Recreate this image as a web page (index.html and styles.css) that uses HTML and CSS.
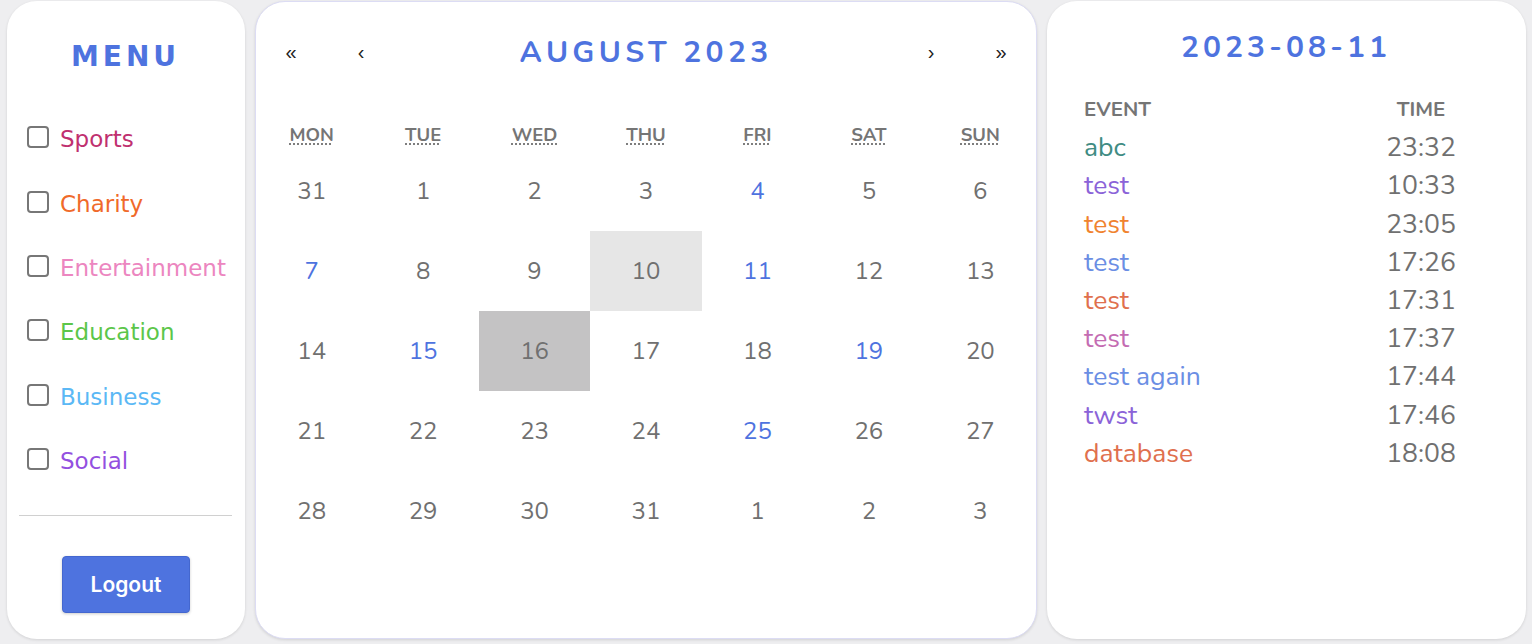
FILE: index.html
```html
<!DOCTYPE html>
<html lang="en">
<head>
    <meta charset="UTF-8">
    <meta name="viewport" content="width=device-width, initial-scale=1.0">
    <title>Event Calendar</title>
    <link rel="stylesheet" href="styles.css">
</head>
<body>
    <div class="layout">
        <aside class="menu">
            <h2 class="menu-title">MENU</h2>
            <ul class="categories">
                <li><label><input type="checkbox"><span class="cat-sports">Sports</span></label></li>
                <li><label><input type="checkbox"><span class="cat-charity">Charity</span></label></li>
                <li><label><input type="checkbox"><span class="cat-entertainment">Entertainment</span></label></li>
                <li><label><input type="checkbox"><span class="cat-education">Education</span></label></li>
                <li><label><input type="checkbox"><span class="cat-business">Business</span></label></li>
                <li><label><input type="checkbox"><span class="cat-social">Social</span></label></li>
            </ul>
            <hr class="divider">
            <div class="logout-wrap">
                <button class="logout" type="button">Logout</button>
            </div>
        </aside>

        <main class="calendar">
            <div class="calendar-nav">
                <button type="button" class="nav-btn">«</button>
                <button type="button" class="nav-btn">‹</button>
                <span class="nav-label">AUGUST 2023</span>
                <button type="button" class="nav-btn">›</button>
                <button type="button" class="nav-btn">»</button>
            </div>
            <div class="weekdays">
                <div><abbr title="Monday">MON</abbr></div>
                <div><abbr title="Tuesday">TUE</abbr></div>
                <div><abbr title="Wednesday">WED</abbr></div>
                <div><abbr title="Thursday">THU</abbr></div>
                <div><abbr title="Friday">FRI</abbr></div>
                <div><abbr title="Saturday">SAT</abbr></div>
                <div><abbr title="Sunday">SUN</abbr></div>
            </div>
            <div class="days" id="days"></div>
        </main>

        <section class="events">
            <h2 class="events-title">2023-08-11</h2>
            <div class="event-table">
                <div class="th">EVENT</div>
                <div class="th time">TIME</div>
                <div class="ev ev-teal">abc</div><div class="time">23:32</div>
                <div class="ev ev-purple">test</div><div class="time">10:33</div>
                <div class="ev ev-orange">test</div><div class="time">23:05</div>
                <div class="ev ev-blue">test</div><div class="time">17:26</div>
                <div class="ev ev-coral">test</div><div class="time">17:31</div>
                <div class="ev ev-pink">test</div><div class="time">17:37</div>
                <div class="ev ev-blue">test again</div><div class="time">17:44</div>
                <div class="ev ev-purple">twst</div><div class="time">17:46</div>
                <div class="ev ev-coral">database</div><div class="time">18:08</div>
            </div>
        </section>
    </div>

    <script>
        const days = [31, 1, 2, 3, 4, 5, 6, 7, 8, 9, 10, 11, 12, 13, 14, 15, 16, 17, 18, 19, 20,
                      21, 22, 23, 24, 25, 26, 27, 28, 29, 30, 31, 1, 2, 3];
        const withEvents = [4, 7, 11, 15, 19, 25];
        const grid = document.getElementById('days');
        days.forEach(function(d, i) {
            const cell = document.createElement('div');
            cell.className = 'day';
            const inMonth = i > 0 && i < 32;
            if (inMonth && withEvents.indexOf(d) !== -1) cell.classList.add('has-event');
            if (inMonth && d === 10) cell.classList.add('today');
            if (inMonth && d === 16) cell.classList.add('active');
            cell.textContent = d;
            grid.appendChild(cell);
        });
    </script>
</body>
</html>
```

FILE: styles.css
```css
body {
    margin: 0;
    background-color: #eeeef0;
    font-family: "Nunito", "Open Sans", sans-serif;
}
.layout {
    display: flex;
    gap: 10px;
    height: 644px;
    padding: 1px 6px 5px 7px;
    box-sizing: border-box;
}
.menu, .calendar, .events {
    background-color: white;
    border-radius: 30px;
    box-shadow: 0 1px 3px rgba(0,0,0,0.12);
    box-sizing: border-box;
}

/* menu */
.menu {
    width: 238px;
    padding: 0 13px 0 12px;
}
.menu-title {
    margin: 38px 0 0;
    line-height: 36px;
    text-align: center;
    font-family: "DejaVu Sans", sans-serif;
    font-size: 28px;
    font-weight: bold;
    letter-spacing: 4px;
    color: #4e73df;
}
.categories {
    list-style: none;
    margin: 32px 0 0;
    padding: 0 0 0 8px;
}
.categories li {
    height: 64.4px;
    display: flex;
    align-items: center;
}
.categories label {
    display: flex;
    align-items: center;
    font-family: "DejaVu Sans", sans-serif;
    font-size: 23px;
}
.categories input[type="checkbox"] {
    appearance: none;
    width: 22px;
    height: 22px;
    margin: -4px 11px 0 0;
    border: 2px solid #777;
    border-radius: 4px;
    box-sizing: border-box;
}
.cat-sports { color: #c0306f; }
.cat-charity { color: #f06a2a; }
.cat-entertainment { color: #ec86c0; }
.cat-education { color: #5cc64a; }
.cat-business { color: #5bb8f5; }
.cat-social { color: #9350e0; }
.divider {
    margin: 22px 0 0;
    border: none;
    border-top: 1px solid #d0d0d0;
}
.logout-wrap {
    display: flex;
    justify-content: center;
    margin-top: 40px;
}
.logout {
    width: 128px;
    height: 57px;
    margin-left: 1px;
    background-color: #4e73df;
    color: white;
    border: 1px solid #4467cf;
    border-radius: 4px;
    box-shadow: 0 1px 3px rgba(0,0,0,0.2);
    font-family: "Inter", sans-serif;
    font-size: 21px;
    font-weight: 600;
    cursor: pointer;
}

/* calendar */
.calendar {
    flex: 1;
    border: 1px solid #dcdcf4;
}
.calendar-nav {
    display: flex;
    align-items: center;
    height: 44px;
    margin-top: 28px;
}
.nav-btn {
    width: 70px;
    background: none;
    border: none;
    font-size: 20px;
    color: #222;
    padding: 0;
    cursor: pointer;
}
.nav-label {
    flex: 1;
    text-align: center;
    font-size: 30px;
    font-weight: bold;
    letter-spacing: 4.3px;
    color: #4e73df;
}
.weekdays {
    display: grid;
    grid-template-columns: repeat(7, 1fr);
    margin-top: 42px;
    height: 35px;
    padding-top: 3px;
    box-sizing: border-box;
    align-items: center;
    text-align: center;
    font-size: 18.5px;
    font-weight: bold;
    color: #757575;
}
.weekdays abbr {
    text-decoration: underline dotted;
    text-underline-offset: 3px;
}
.days {
    display: grid;
    grid-template-columns: repeat(7, 1fr);
    grid-auto-rows: 80px;
}
.day {
    display: flex;
    align-items: center;
    justify-content: center;
    font-size: 24px;
    color: #707070;
}
.day.has-event { color: #4e73df; }
.day.today { background-color: #e6e6e6; }
.day.active { background-color: #c4c3c4; }

/* events */
.events {
    width: 479px;
    padding: 27px 38px 0 37px;
}
.events-title {
    margin: 0;
    line-height: 40px;
    text-align: center;
    font-size: 30px;
    font-weight: bold;
    letter-spacing: 4px;
    color: #4e73df;
}
.event-table {
    display: grid;
    grid-template-columns: 1fr 134px;
    grid-auto-rows: 38.2px;
    align-items: center;
    margin-top: 22px;
    font-size: 26.5px;
    color: #707070;
}
.event-table .th {
    font-size: 20.5px;
    font-weight: bold;
    color: #757575;
}
.time { text-align: center; }
.ev-teal { color: #408c83; }
.ev-purple { color: #8b63d8; }
.ev-orange { color: #f0832f; }
.ev-blue { color: #6b8ee4; }
.ev-coral { color: #e0704e; }
.ev-pink { color: #c46cb2; }
```
